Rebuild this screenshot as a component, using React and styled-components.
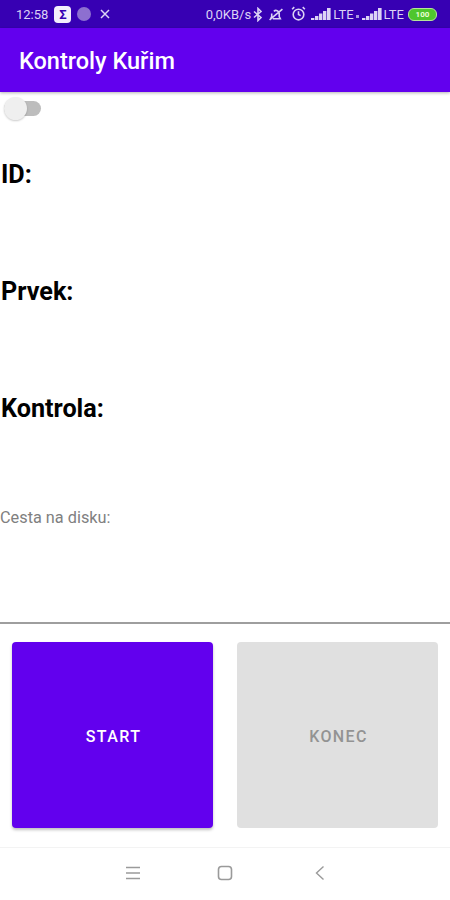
import React from 'react';
import styled, { createGlobalStyle } from 'styled-components';

const GlobalStyle = createGlobalStyle`
  html, body {
    margin: 0;
    padding: 0;
    background: #fff;
  }
  body {
    font-family: Roboto, "Liberation Sans", sans-serif;
  }
`;

const Screen = styled.div`
  width: 450px;
  height: 900px;
  display: flex;
  flex-direction: column;
  overflow: hidden;
  background: #fff;
`;

const StatusBar = styled.div`
  height: 28px;
  flex: none;
  background: #3700b3;
  color: #dcd2f5;
  display: flex;
  align-items: center;
  justify-content: space-between;
  padding: 0 13px 0 16px;
  font-size: 13px;
`;

const StatusGroup = styled.div`
  display: flex;
  align-items: center;
  gap: ${(p) => p.$gap || 6}px;
`;

const SigmaBadge = styled.span`
  width: 17px;
  height: 17px;
  border-radius: 4px;
  background: #f3effc;
  color: #3700b3;
  font-size: 13px;
  font-weight: 700;
  display: flex;
  align-items: center;
  justify-content: center;
`;

const Dot = styled.span`
  width: 14px;
  height: 14px;
  border-radius: 50%;
  background: #8d6fd0;
  margin-right: 2px;
`;

const SimDot = styled.span`
  width: 3px;
  height: 3px;
  margin: 4px 1px 0 0;
  background: #a995e0;
`;

const Battery = styled.span`
  width: 27px;
  height: 11px;
  margin-left: 2px;
  border-radius: 6px;
  border: 1px solid #b5e59a;
  background: #4fc62e;
  color: #eaffd8;
  font-size: 8px;
  font-weight: 700;
  display: flex;
  align-items: center;
  justify-content: center;
`;

const AppBar = styled.header`
  height: 64px;
  flex: none;
  box-sizing: border-box;
  background: #6200ee;
  color: #fff;
  display: flex;
  align-items: center;
  padding: 2px 0 0 19px;
  font-size: 23.5px;
  font-weight: 500;
  box-shadow: 0 1px 3px rgba(0, 0, 0, 0.3);
  position: relative;
`;

const Content = styled.main`
  flex: 1;
  display: flex;
  flex-direction: column;
`;

const SwitchRow = styled.div`
  height: 32px;
  flex: none;
  display: flex;
  align-items: center;
  padding-left: 4px;
`;

const Switch = styled.div`
  width: 37px;
  height: 15px;
  border-radius: 8px;
  background: #bdbdbd;
  position: relative;
`;

const Thumb = styled.span`
  position: absolute;
  left: 0;
  top: -4px;
  width: 23px;
  height: 23px;
  border-radius: 50%;
  background: #efefef;
  box-shadow: 0 1px 2px rgba(0, 0, 0, 0.2);
`;

const Fields = styled.section`
  padding-top: 37px;
`;

const FieldLabel = styled.h2`
  margin: 0;
  height: ${(p) => p.$height}px;
  padding-left: 1px;
  font-size: 25.2px;
  line-height: 28px;
  font-weight: 700;
  color: #000;
`;

const PathLabel = styled.div`
  height: 113px;
  flex: none;
  font-size: 16.3px;
  line-height: 18px;
  color: #808080;
`;

const Divider = styled.div`
  height: 2px;
  background: #9e9e9e;
  flex: none;
`;

const Buttons = styled.div`
  display: grid;
  grid-template-columns: 1fr 1fr;
  gap: 24px;
  padding: 18px 12px;
`;

const ActionButton = styled.button`
  height: 186px;
  border: 0;
  border-radius: 4px;
  padding: 2px 0 0 2px;
  font-family: inherit;
  font-size: 16px;
  font-weight: 500;
  letter-spacing: 1.4px;
  background: ${(p) => (p.disabled ? '#e0e0e0' : '#6200ee')};
  color: ${(p) => (p.disabled ? '#939393' : '#fff')};
  box-shadow: ${(p) => (p.disabled ? 'none' : '0 2px 3px rgba(0, 0, 0, 0.25)')};
`;

const NavBar = styled.nav`
  height: 53px;
  flex: none;
  box-sizing: border-box;
  border-top: 1px solid #f3f3f3;
  display: grid;
  grid-template-columns: repeat(3, 24px);
  justify-content: center;
  column-gap: 69px;
  align-items: center;
  padding-bottom: 2px;
  color: #9a9a9a;
`;

const Signal = () => (
  <svg width="20" height="14" viewBox="0 0 20 14" fill="#dcd2f5">
    <path d="M0 13h3.4v-2H0zM4 13h3.4V9H4zM8 13h3.4V6.5H8zM12 13h3.4V4H12zM16 13h3.6V1H16z" />
  </svg>
);

export default function App() {
  return (
    <Screen>
      <GlobalStyle />
      <StatusBar>
        <StatusGroup>
          <span>12:58</span>
          <SigmaBadge>Σ</SigmaBadge>
          <Dot />
          <svg width="12" height="12" viewBox="0 0 12 12" stroke="#dcd2f5" strokeWidth="1.5">
            <path d="M2 2l8 8M10 2l-8 8" />
          </svg>
        </StatusGroup>
        <StatusGroup $gap={2}>
          <span>0,0KB/s</span>
          <svg width="10" height="15" viewBox="0 0 10 14" fill="none" stroke="#dcd2f5" strokeWidth="1.6">
            <path d="M1 4l7 6-3 3V1l3 3-7 6" />
          </svg>
          <svg width="18" height="15" viewBox="0 0 16 14" fill="none" stroke="#dcd2f5" strokeWidth="1.5" style={{ marginLeft: 2 }}>
            <path d="M5 11h7l-1-2V6a3 3 0 0 0-5-2M4 6v3l-1 2M2 12L14 2" />
          </svg>
          <svg width="17" height="16" viewBox="0 0 16 15" fill="none" stroke="#dcd2f5" strokeWidth="1.5" style={{ margin: '0 2px 0 3px' }}>
            <circle cx="8" cy="8" r="5" />
            <path d="M8 5v3l2 1M2 3l2-2M14 3l-2-2" />
          </svg>
          <Signal />
          <span>LTE</span>
          <SimDot />
          <Signal />
          <span>LTE</span>
          <Battery>100</Battery>
        </StatusGroup>
      </StatusBar>
      <AppBar>Kontroly Kuřim</AppBar>
      <Content>
        <SwitchRow>
          <Switch>
            <Thumb />
          </Switch>
        </SwitchRow>
        <Fields>
          <FieldLabel $height={117}>ID:</FieldLabel>
          <FieldLabel $height={117}>Prvek:</FieldLabel>
          <FieldLabel $height={114}>Kontrola:</FieldLabel>
        </Fields>
        <PathLabel>Cesta na disku:</PathLabel>
        <Divider />
        <Buttons>
          <ActionButton>START</ActionButton>
          <ActionButton disabled>KONEC</ActionButton>
        </Buttons>
      </Content>
      <NavBar>
        <svg width="24" height="24" viewBox="0 0 24 24" fill="none" stroke="currentColor" strokeWidth="1.4">
          <path d="M6 6.5h14M6 12h14M6 17.5h14" />
        </svg>
        <svg width="24" height="24" viewBox="0 0 24 24" fill="none" stroke="currentColor" strokeWidth="1.6">
          <rect x="5.5" y="5.5" width="13" height="13" rx="3" />
        </svg>
        <svg width="24" height="24" viewBox="0 0 24 24" fill="none" stroke="currentColor" strokeWidth="1.4">
          <path d="M17.5 5.5l-7 6.5 7 6.5" />
        </svg>
      </NavBar>
    </Screen>
  );
}
